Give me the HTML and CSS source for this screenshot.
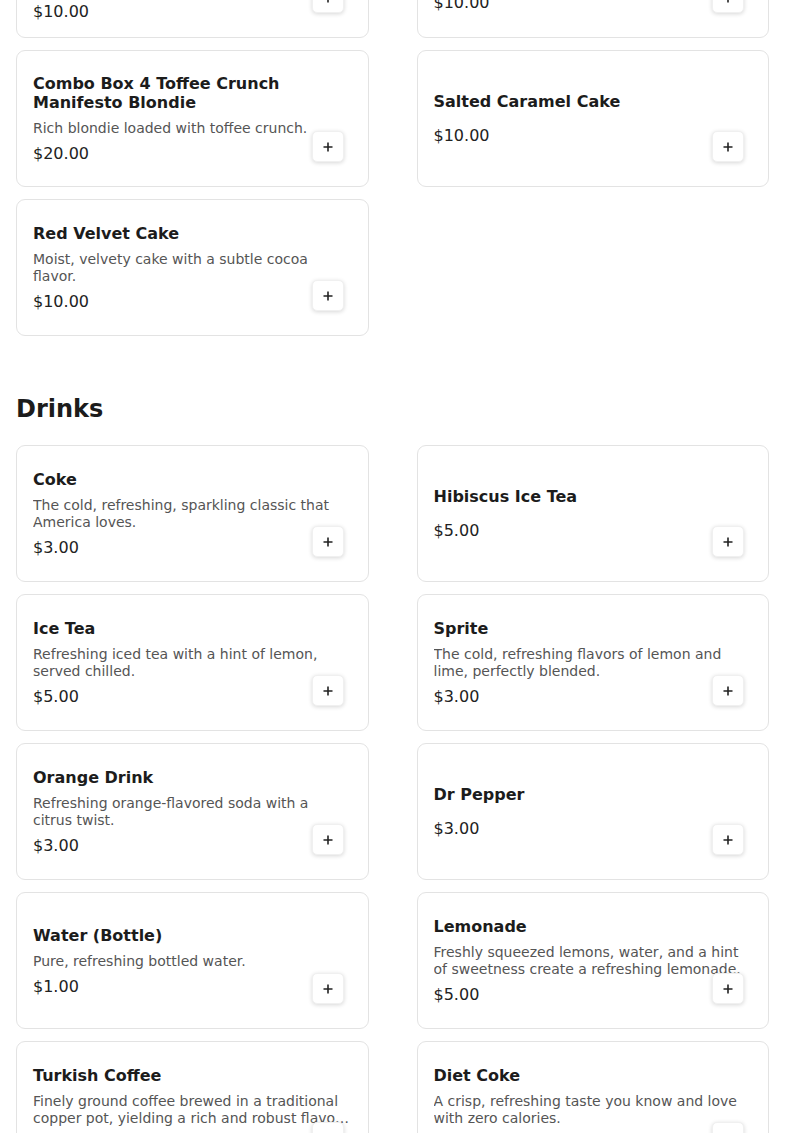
FILE: index.html
```html
<!DOCTYPE html>
<html lang="en">
<head>
<meta charset="utf-8">
<title>Menu</title>
<link rel="stylesheet" href="styles.css">
</head>
<body>
<main class="menu">
  <section class="section section-first">
    <div class="grid grid-scrolled">
      <div class="card">
        <div class="name">Combo Box 3 Chocolate Chip Cookie Dough Brownie</div>
        <div class="desc">Fudgy brownie layered with chocolate chip cookie dough, finished with a rich chocolate drizzle.</div>
        <div class="price">$10.00</div>
        <button class="add" aria-label="Add"><svg viewBox="0 0 10 10" width="10" height="10"><path d="M5 0.5v9M0.5 5h9"/></svg></button>
      </div>
      <div class="card">
        <div class="name">Chocolate Fudge Cake</div>
        <div class="desc">Layers of moist chocolate cake with a rich, creamy fudge frosting.</div>
        <div class="price">$10.00</div>
        <button class="add" aria-label="Add"><svg viewBox="0 0 10 10" width="10" height="10"><path d="M5 0.5v9M0.5 5h9"/></svg></button>
      </div>
      <div class="card">
        <div class="name">Combo Box 4 Toffee Crunch Manifesto Blondie</div>
        <div class="desc">Rich blondie loaded with toffee crunch.</div>
        <div class="price">$20.00</div>
        <button class="add" aria-label="Add"><svg viewBox="0 0 10 10" width="10" height="10"><path d="M5 0.5v9M0.5 5h9"/></svg></button>
      </div>
      <div class="card">
        <div class="name">Salted Caramel Cake</div>
        <div class="desc"></div>
        <div class="price">$10.00</div>
        <button class="add" aria-label="Add"><svg viewBox="0 0 10 10" width="10" height="10"><path d="M5 0.5v9M0.5 5h9"/></svg></button>
      </div>
      <div class="card">
        <div class="name">Red Velvet Cake</div>
        <div class="desc">Moist, velvety cake with a subtle cocoa flavor.</div>
        <div class="price">$10.00</div>
        <button class="add" aria-label="Add"><svg viewBox="0 0 10 10" width="10" height="10"><path d="M5 0.5v9M0.5 5h9"/></svg></button>
      </div>
    </div>
  </section>

  <section class="section">
    <h2 class="section-title">Drinks</h2>
    <div class="grid">
      <div class="card">
        <div class="name">Coke</div>
        <div class="desc">The cold, refreshing, sparkling classic that America loves.</div>
        <div class="price">$3.00</div>
        <button class="add" aria-label="Add"><svg viewBox="0 0 10 10" width="10" height="10"><path d="M5 0.5v9M0.5 5h9"/></svg></button>
      </div>
      <div class="card">
        <div class="name">Hibiscus Ice Tea</div>
        <div class="desc"></div>
        <div class="price">$5.00</div>
        <button class="add" aria-label="Add"><svg viewBox="0 0 10 10" width="10" height="10"><path d="M5 0.5v9M0.5 5h9"/></svg></button>
      </div>
      <div class="card">
        <div class="name">Ice Tea</div>
        <div class="desc">Refreshing iced tea with a hint of lemon, served chilled.</div>
        <div class="price">$5.00</div>
        <button class="add" aria-label="Add"><svg viewBox="0 0 10 10" width="10" height="10"><path d="M5 0.5v9M0.5 5h9"/></svg></button>
      </div>
      <div class="card">
        <div class="name">Sprite</div>
        <div class="desc">The cold, refreshing flavors of lemon and lime, perfectly blended.</div>
        <div class="price">$3.00</div>
        <button class="add" aria-label="Add"><svg viewBox="0 0 10 10" width="10" height="10"><path d="M5 0.5v9M0.5 5h9"/></svg></button>
      </div>
      <div class="card">
        <div class="name">Orange Drink</div>
        <div class="desc">Refreshing orange-flavored soda with a citrus twist.</div>
        <div class="price">$3.00</div>
        <button class="add" aria-label="Add"><svg viewBox="0 0 10 10" width="10" height="10"><path d="M5 0.5v9M0.5 5h9"/></svg></button>
      </div>
      <div class="card">
        <div class="name">Dr Pepper</div>
        <div class="desc"></div>
        <div class="price">$3.00</div>
        <button class="add" aria-label="Add"><svg viewBox="0 0 10 10" width="10" height="10"><path d="M5 0.5v9M0.5 5h9"/></svg></button>
      </div>
      <div class="card">
        <div class="name">Water (Bottle)</div>
        <div class="desc">Pure, refreshing bottled water.</div>
        <div class="price">$1.00</div>
        <button class="add" aria-label="Add"><svg viewBox="0 0 10 10" width="10" height="10"><path d="M5 0.5v9M0.5 5h9"/></svg></button>
      </div>
      <div class="card">
        <div class="name">Lemonade</div>
        <div class="desc">Freshly squeezed lemons, water, and a hint of sweetness create a refreshing lemonade.</div>
        <div class="price">$5.00</div>
        <button class="add" aria-label="Add"><svg viewBox="0 0 10 10" width="10" height="10"><path d="M5 0.5v9M0.5 5h9"/></svg></button>
      </div>
      <div class="card">
        <div class="name">Turkish Coffee</div>
        <div class="desc">Finely ground coffee brewed in a traditional copper pot, yielding a rich and robust flavor with a velvety foam.</div>
        <div class="price">$4.00</div>
        <button class="add" aria-label="Add"><svg viewBox="0 0 10 10" width="10" height="10"><path d="M5 0.5v9M0.5 5h9"/></svg></button>
      </div>
      <div class="card">
        <div class="name">Diet Coke</div>
        <div class="desc">A crisp, refreshing taste you know and love with zero calories.</div>
        <div class="price">$3.00</div>
        <button class="add" aria-label="Add"><svg viewBox="0 0 10 10" width="10" height="10"><path d="M5 0.5v9M0.5 5h9"/></svg></button>
      </div>
    </div>
  </section>
</main>
</body>
</html>
```

FILE: styles.css
```css
* {
  box-sizing: border-box;
}

html, body {
  margin: 0;
  padding: 0;
  background: #ffffff;
}

body {
  font-family: "DejaVu Sans", "Liberation Sans", sans-serif;
  color: #1c1c1c;
}

.menu {
  padding: 0 16px 40px;
}

.section + .section {
  margin-top: 59px;
}

.grid-scrolled {
  margin-top: -102px;
}

.section-title {
  margin: 0 0 21px;
  font-size: 24px;
  line-height: 29px;
  font-weight: 700;
  color: #1c1c1c;
}

.grid {
  display: grid;
  grid-template-columns: 1fr 1fr;
  column-gap: 48px;
  row-gap: 12px;
}

.card {
  position: relative;
  min-height: 137px;
  padding: 16px;
  border: 1px solid #e3e3e3;
  border-radius: 9px;
  background: #fff;
  display: flex;
  flex-direction: column;
  justify-content: center;
}

.name {
  font-size: 16px;
  line-height: 19px;
  font-weight: 700;
  color: #1c1c1c;
}

.desc {
  margin-top: 8px;
  font-size: 14px;
  line-height: 17px;
  color: #555555;
  display: -webkit-box;
  -webkit-line-clamp: 2;
  -webkit-box-orient: vertical;
  overflow: hidden;
}

.price {
  margin-top: 7px;
  font-size: 16px;
  line-height: 19px;
  color: #222222;
}

.add {
  position: absolute;
  right: 24px;
  bottom: 24px;
  width: 32px;
  height: 31px;
  padding: 0;
  border: 1px solid #f0f0f0;
  border-radius: 5px;
  background: #ffffff;
  box-shadow: 0 1px 4px rgba(0, 0, 0, 0.16);
  display: flex;
  align-items: center;
  justify-content: center;
  cursor: pointer;
}

.add svg {
  display: block;
}

.add path {
  fill: none;
  stroke: #222222;
  stroke-width: 1.6;
}
```
